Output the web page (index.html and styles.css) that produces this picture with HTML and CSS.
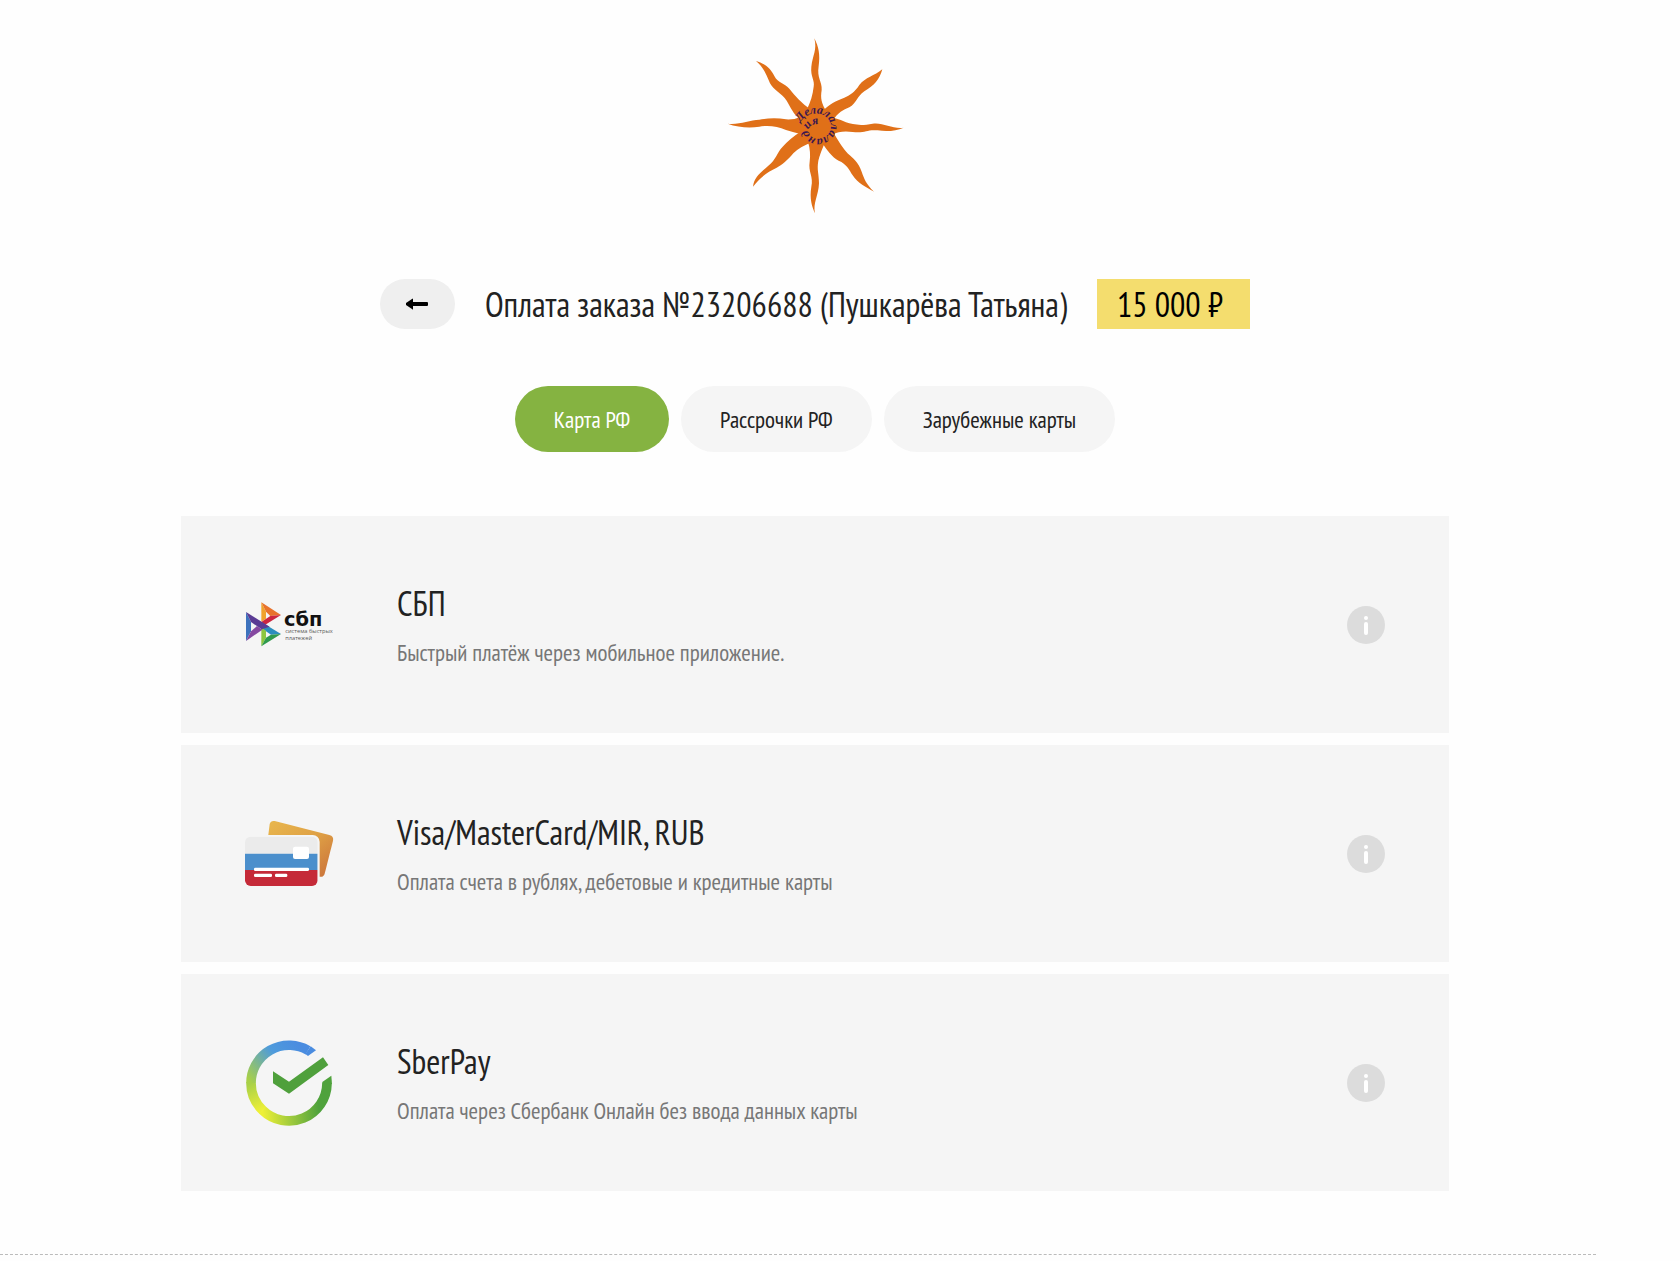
FILE: index.html
```html
<!DOCTYPE html>
<html lang="ru">
<head>
    <meta charset="UTF-8">
    <meta name="viewport" content="width=device-width, initial-scale=1.0">
    <title>Оплата заказа №23206688</title>
    <link rel="stylesheet" href="styles.css">
</head>
<body>
    <div class="page">
        <header class="logo">
            <svg class="logo-img" viewBox="20 24 534 528" role="img" aria-label="Делалалаландия">
                <g fill="#e07018">
                    <circle cx="294" cy="290" r="57"/>
                    <path d="M285 25C294 60 280 75 276 110C273 140 287 150 283 170C280 195 274 215 262 240L322 245C306 220 303 205 307 180C309 155 292 145 298 108C303 75 298 50 285 25Z"/>
                    <path d="M489 118C465 138 438 142 420 165C405 188 392 195 375 203C350 212 330 222 308 245L342 270C355 248 372 240 390 232C412 220 412 200 435 184C465 166 480 150 489 118Z"/>
                    <path d="M553 293C520 298 490 276 460 281C425 288 400 284 380 277Q360 268 338 262L338 314Q365 300 400 306C440 310 440 298 475 301C505 306 530 302 553 293Z"/>
                    <path d="M464 485C440 462 434 445 427 425C418 396 400 384 386 371C372 356 360 338 345 312L308 338C322 358 338 382 358 392C382 402 390 420 400 436C415 460 440 472 464 485Z"/>
                    <path d="M287 550C280 520 298 495 299 460C299 430 292 420 297 392Q302 370 318 335L266 335Q275 365 271 395C266 425 283 440 276 470C270 505 278 530 287 550Z"/>
                    <path d="M101 470C104 440 130 423 147 407C170 390 172 368 190 350Q212 325 248 302L282 335Q240 350 222 370C205 390 188 406 172 413C145 425 120 445 101 470Z"/>
                    <path d="M25 281C60 285 90 270 120 269C150 264 175 264 200 268Q225 270 252 258L252 314Q225 308 200 300C175 290 150 285 120 290C90 295 55 292 25 281Z"/>
                    <path d="M110 93C140 102 155 118 165 138C176 160 197 160 210 176C228 198 245 218 276 240L242 268C222 252 214 232 202 212C188 190 162 180 152 160C142 138 134 112 110 93Z"/>
                </g>
                <path id="spiral" fill="none" d="M244 278C250 260 272 250 294 251C318 252 334 270 334 290C334 312 315 326 294 326C276 325 267 312 268 300C270 285 284 280 320 283"/>
                <text class="logo-text"><textPath href="#spiral">Делалалаландия</textPath></text>
            </svg>
        </header>

        <main>
            <div class="order">
                <button class="back" type="button" aria-label="Назад">
                    <svg viewBox="0 0 22 12" aria-hidden="true"><path d="M7 1V4H21Q22 4 22 5V7Q22 8 21 8H7V11Q7 12 6 11L0 7Q0 6 0 5L6 1Q7 0 7 1Z"/></svg>
                </button>
                <h1>Оплата заказа №23206688 (Пушкарёва Татьяна)</h1>
                <div class="price">15 000 ₽</div>
            </div>

            <nav class="tabs">
                <button class="tab active" type="button">Карта РФ</button>
                <button class="tab" type="button">Рассрочки РФ</button>
                <button class="tab" type="button">Зарубежные карты</button>
            </nav>

            <ul class="methods">
                <li class="method">
                    <svg class="method-icon" viewBox="30 30 267 142" aria-hidden="true">
                        <path fill="#f0a32c" d="M79 34L93 62V83L79 92Z"/>
                        <path fill="#e8722c" d="M79 34L138 72L106 75L93 62Z"/>
                        <path fill="#cc2640" d="M138 72L80 108V92L106 75Z"/>
                        <path fill="#2b8dbd" d="M80 94L138 129L108 131L80 112Z"/>
                        <path fill="#8dc63f" d="M79 108L93 120V140L79 166Z"/>
                        <path fill="#2f9a4d" d="M138 129L79 166L93 140L108 131Z"/>
                        <path fill="#3d72bd" d="M33 63L48 93V121L33 150Z"/>
                        <path fill="#5a3b94" d="M33 63L104 107L80 115L48 93Z"/>
                        <path fill="#8548a0" d="M33 150L48 121L66 105L82 116Z"/>
                        <text class="sbp-name" x="147" y="104">сбп</text>
                        <text class="sbp-note" x="151" y="127">система быстрых</text>
                        <text class="sbp-note" x="151" y="146">платежей</text>
                    </svg>
                    <div class="method-text">
                        <h2>СБП</h2>
                        <p>Быстрый платёж через мобильное приложение.</p>
                    </div>
                    <button class="info" type="button" aria-label="Подробнее">
                        <svg viewBox="0 0 38 38" aria-hidden="true"><circle cx="19" cy="12" r="2"/><rect x="17" y="16" width="4" height="13" rx="2"/></svg>
                    </button>
                </li>
                <li class="method">
                    <svg class="method-icon" viewBox="30 28 267 200" aria-hidden="true">
                        <defs>
                            <linearGradient id="gold" x1="0" y1="0" x2="1" y2="1">
                                <stop offset="0" stop-color="#e9b84e"/>
                                <stop offset="0.5" stop-color="#dfa145"/>
                                <stop offset="1" stop-color="#c9703a"/>
                            </linearGradient>
                            <clipPath id="front"><rect x="30" y="78" width="218" height="148" rx="17"/></clipPath>
                        </defs>
                        <path fill="url(#gold)" d="M104 40Q107 29 119 31L283 73Q297 77 294 90L269 189Q266 200 254 198L90 155Z"/>
                        <rect fill="#f5f5f5" x="24" y="73" width="230" height="158" rx="21"/>
                        <g clip-path="url(#front)">
                            <path fill="#ebebeb" d="M30 78H248V129H30Z"/>
                            <path fill="#4b8fcc" d="M30 129H248V178H30Z"/>
                            <path fill="#c52a38" d="M30 178H248V226H30Z"/>
                        </g>
                        <g fill="#fff">
                            <rect x="174" y="108" width="48" height="37" rx="6"/>
                            <rect x="57" y="171" width="165" height="10" rx="4"/>
                            <rect x="57" y="189" width="54" height="10" rx="4"/>
                            <rect x="120" y="189" width="37" height="10" rx="4"/>
                        </g>
                    </svg>
                    <div class="method-text">
                        <h2>Visa/MasterCard/MIR, RUB</h2>
                        <p>Оплата счета в рублях, дебетовые и кредитные карты</p>
                    </div>
                    <button class="info" type="button" aria-label="Подробнее">
                        <svg viewBox="0 0 38 38" aria-hidden="true"><circle cx="19" cy="12" r="2"/><rect x="17" y="16" width="4" height="13" rx="2"/></svg>
                    </button>
                </li>
                <li class="method">
                    <svg class="method-icon" viewBox="30 25 267 260" aria-hidden="true">
                        <defs>
                            <linearGradient id="sky" gradientUnits="userSpaceOnUse" x1="190" y1="40" x2="50" y2="157">
                                <stop offset="0" stop-color="#4a8ce0"/>
                                <stop offset="0.4" stop-color="#4e9bdc"/>
                                <stop offset="1" stop-color="#a8d048"/>
                            </linearGradient>
                            <linearGradient id="lime" gradientUnits="userSpaceOnUse" x1="48" y1="157" x2="82" y2="238">
                                <stop offset="0" stop-color="#a8d048"/>
                                <stop offset="1" stop-color="#eef036"/>
                            </linearGradient>
                            <linearGradient id="leaf" gradientUnits="userSpaceOnUse" x1="82" y1="238" x2="250" y2="220">
                                <stop offset="0" stop-color="#eef036"/>
                                <stop offset="0.5" stop-color="#9cc93d"/>
                                <stop offset="1" stop-color="#4fa23c"/>
                            </linearGradient>
                        </defs>
                        <g fill="none" stroke-width="29">
                            <path stroke="url(#leaf)" d="M82 238A114 114 0 0 0 276 158"/>
                            <path stroke="url(#lime)" d="M48 155A114 114 0 0 0 83 239"/>
                            <path stroke="url(#sky)" d="M219 59A114 114 0 0 0 48 157"/>
                        </g>
                        <path fill="#4a8ce0" d="M211 70L227 47L243 59L219 76Z"/>
                        <path fill="#4fa23c" d="M262 154L289 135L291 160H262Z"/>
                        <path fill="#4fa03c" d="M114 122L162 153L264 80L280 103L162 189L114 158Z"/>
                    </svg>
                    <div class="method-text">
                        <h2>SberPay</h2>
                        <p>Оплата через Сбербанк Онлайн без ввода данных карты</p>
                    </div>
                    <button class="info" type="button" aria-label="Подробнее">
                        <svg viewBox="0 0 38 38" aria-hidden="true"><circle cx="19" cy="12" r="2"/><rect x="17" y="16" width="4" height="13" rx="2"/></svg>
                    </button>
                </li>
            </ul>
        </main>

        <hr class="divider">
    </div>
</body>
</html>
```
FILE: styles.css
```css
:root {
    --accent: #85b341;
    --price: #f4dd6e;
    --panel: #f5f5f5;
    --text: #222;
    --muted: #777;
}

* {
    margin: 0;
    padding: 0;
    box-sizing: border-box;
}

body {
    font-family: 'PT Sans Narrow', 'Liberation Sans Narrow', 'Open Sans Condensed', 'Noto Sans', sans-serif;
    color: var(--text);
    background-color: #fefefe;
}

button {
    border: none;
    font: inherit;
    color: inherit;
    cursor: pointer;
}

.page {
    padding-right: 50px;
}

.logo {
    display: flex;
    justify-content: center;
    padding: 38px 0 65px;
}

.logo-img {
    width: 178px;
    height: 176px;
}

.logo-text {
    font: italic bold 36px 'Liberation Serif', serif;
    fill: #3b1650;
}

.order {
    display: flex;
    justify-content: center;
    align-items: center;
    gap: 30px;
    margin-bottom: 57px;
}

.back {
    width: 75px;
    height: 50px;
    border-radius: 25px;
    background-color: #efefef;
}

.back svg {
    width: 22px;
    height: 12px;
}

.order h1 {
    font-size: 34px;
    font-weight: 400;
    line-height: 50px;
}

.price {
    padding: 0 27px 0 20px;
    font-size: 34px;
    line-height: 50px;
    color: #000;
    background-color: var(--price);
}

.tabs {
    display: flex;
    justify-content: center;
    gap: 12px;
    margin-bottom: 64px;
}

.tab {
    height: 66px;
    padding: 0 39px;
    border-radius: 33px;
    font-size: 23px;
    background-color: var(--panel);
}

.tab.active {
    color: #fff;
    background-color: var(--accent);
}

.methods {
    display: flex;
    flex-direction: column;
    gap: 12px;
    max-width: 1268px;
    margin: 0 auto;
    list-style: none;
}

.method {
    display: flex;
    align-items: center;
    min-height: 217px;
    padding: 0 64px;
    background-color: var(--panel);
}

.method-icon {
    width: 89px;
    margin-right: 63px;
}

.sbp-name {
    font: bold 58px 'DejaVu Sans', sans-serif;
    fill: #111;
}

.sbp-note {
    font: 17px 'Open Sans', sans-serif;
    fill: #555;
}

.method-text {
    flex: 1;
    padding-top: 7px;
}

.method-text h2 {
    font-size: 34px;
    font-weight: 400;
    line-height: 50px;
}

.method-text p {
    font-size: 23px;
    line-height: 50px;
    color: var(--muted);
}

.info {
    width: 38px;
    height: 38px;
    border-radius: 50%;
    background-color: #dcdcdc;
}

.info svg {
    display: block;
    fill: #fff;
}

.divider {
    margin: 63px 34px 0 0;
    border: none;
    border-top: 1px dashed #bbb;
}
```
